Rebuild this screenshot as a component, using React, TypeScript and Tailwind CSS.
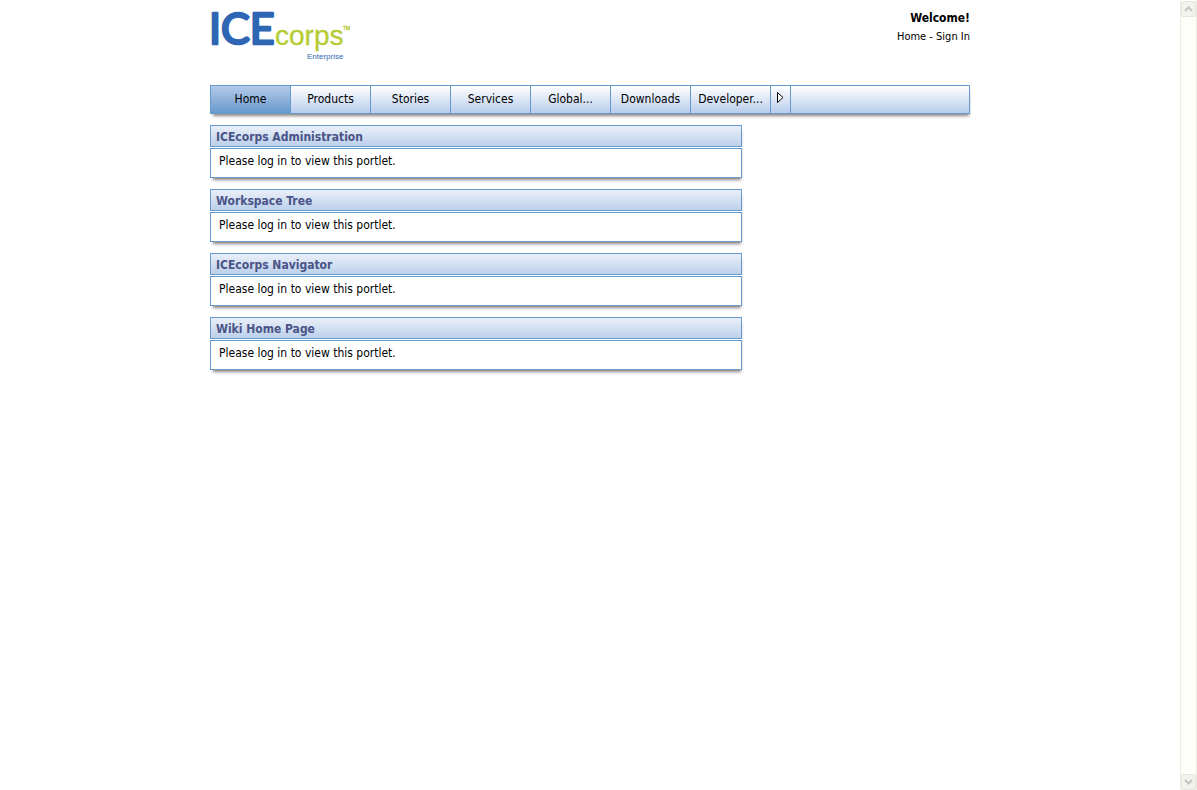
const tabs = ["Home", "Products", "Stories", "Services", "Global...", "Downloads", "Developer..."];

const portlets = ["ICEcorps Administration", "Workspace Tree", "ICEcorps Navigator", "Wiki Home Page"];

function Logo() {
  return (
    <svg className="-ml-1" width="154" height="64" viewBox="-4 0 154 64" role="img" aria-label="ICEcorps Enterprise">
      <text x="-1" y="43" fontFamily="Lato, sans-serif" fontWeight="400" fontSize="43" fill="#2f66b3" stroke="#2f66b3" strokeWidth="2.5" strokeLinejoin="round">
        ICE
      </text>
      <text x="65" y="44" fontFamily="'Liberation Sans', sans-serif" fontSize="28" fill="#b5cc34" stroke="#b5cc34" strokeWidth="0.3">
        corps
      </text>
      <text x="133" y="29" fontFamily="'Liberation Sans', sans-serif" fontSize="5" fill="#b5cc34" stroke="#b5cc34" strokeWidth="0.3">
        TM
      </text>
      <text x="97" y="58" fontFamily="'Liberation Sans', sans-serif" fontSize="8" fill="#2f66b3">
        Enterprise
      </text>
    </svg>
  );
}

function Portlet({ title }: { title: string }) {
  return (
    <section className="flex flex-col gap-px shadow-[1px_4px_3px_-2px_#8d8681]">
      <h2 className="h-[22px] border border-[#6699cc] bg-linear-to-b from-[#ebf0f9] to-[#bbd0ea] px-[5px] text-[12px] leading-[22px] font-bold text-[#4a5488]">
        {title}
      </h2>
      <p className="h-[30px] border border-[#6699cc] bg-white px-2 text-[12px] leading-6">
        Please log in to view this portlet.
      </p>
    </section>
  );
}

function ScrollButton({ down = false }: { down?: boolean }) {
  return (
    <button
      type="button"
      aria-label={down ? "Scroll down" : "Scroll up"}
      className="flex h-4 w-[15px] items-center justify-center rounded-xs border border-[#e6e6df] bg-[#f2f2ee]"
    >
      <svg width="9" height="6" viewBox="0 0 9 6" fill="none" stroke="#c6c6be" strokeWidth="2">
        <path d={down ? "M1 1l3.5 3.5L8 1" : "M1 5l3.5-3.5L8 5"} />
      </svg>
    </button>
  );
}

export default function App() {
  return (
    <div className="flex min-h-screen bg-white font-['Tahoma','DejaVu_Sans_Condensed','DejaVu_Sans',sans-serif] text-black">
      <div className="flex flex-1 justify-center">
        <div className="w-full max-w-[760px]">
          <header className="flex h-[85px] items-start justify-between pt-px">
            <a href="#home">
              <Logo />
            </a>
            <div className="pt-[9px] text-right">
              <p className="text-[12px] leading-4 font-bold">Welcome!</p>
              <p className="pt-1 text-[11px] leading-[14px]">
                <a href="#home">Home</a> - <a href="#signin">Sign In</a>
              </p>
            </div>
          </header>

          <nav className="flex h-[29px] border border-[#6699cc] bg-linear-to-b from-white to-[#b9cdec] text-[12px] shadow-[1px_4px_3px_-2px_#8d8681]">
            {tabs.map((tab, i) => (
              <a
                key={tab}
                href="#tab"
                className={`w-20 border-r border-[#6699cc] text-center leading-[26px] ${i === 0 ? "bg-linear-to-b from-[#b5caea] to-[#6699cc]" : ""}`}
              >
                {tab}
              </a>
            ))}
            <button type="button" aria-label="More tabs" className="flex w-5 justify-center border-r border-[#6699cc] pt-1.5">
              <svg width="7" height="11" viewBox="0 0 7 11" fill="#fff" stroke="#000">
                <path d="M.5.5v10l5.5-5z" />
              </svg>
            </button>
          </nav>

          <main className="mt-[11px] flex w-[70%] flex-col gap-[11px]">
            {portlets.map((title) => (
              <Portlet key={title} title={title} />
            ))}
          </main>
        </div>
      </div>

      <aside className="flex w-[17px] flex-col items-center justify-between border-x border-[#eeede5] bg-[#fefefb] pt-px">
        <ScrollButton />
        <ScrollButton down />
      </aside>
    </div>
  );
}
